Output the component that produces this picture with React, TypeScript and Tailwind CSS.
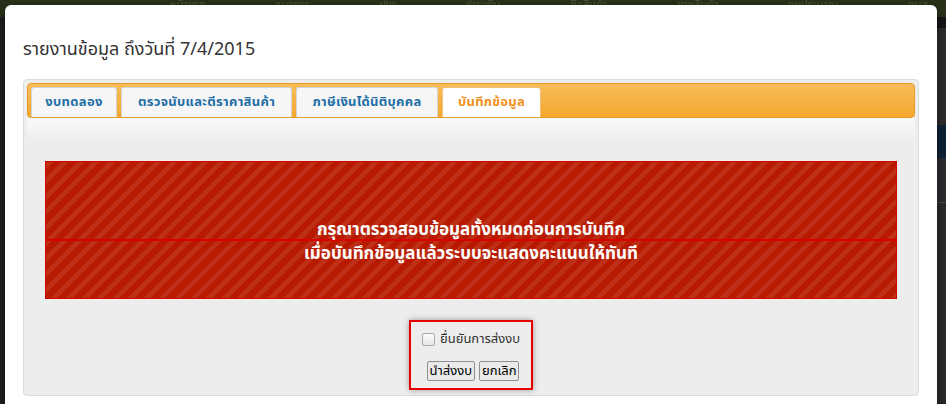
import React from 'react';

const tabs = [
  { label: 'งบทดลอง', w: 'w-[86px]' },
  { label: 'ตรวจนับและตีราคาสินค้า', w: 'w-[171px]' },
  { label: 'ภาษีเงินได้นิติบุคคล', w: 'w-[142px]' },
];

export default function App() {
  return (
    <div className="relative h-[404px] w-[946px] overflow-hidden bg-[#1f1f1f] font-['Noto_Sans_Thai','Noto_Sans','DejaVu_Sans',sans-serif]">
      {/* page behind the modal */}
      <div className="flex h-[17px] items-start gap-[70px] bg-[#29311a] pl-[170px] text-[11px] leading-[10px] text-[#4a5533]">
        <span>หน้าแรก</span>
        <span>ธนาคาร</span>
        <span>เช็ค</span>
        <span>ชำระเงิน</span>
        <span>ซื้อสินค้า</span>
        <span>ขายสินค้า</span>
        <span>งบประมาณ</span>
        <span>คนส</span>
      </div>
      <div className="flex justify-end">
        <div className="flex w-[9px] flex-col">
          <div className="h-[11px] bg-[#151515]" />
          <div className="h-[97px] bg-[#2c2c2c]" />
          <div className="h-[33px] bg-[#0f2137]" />
          <div className="h-[44px] bg-[#2a2c30]" />
          <div className="h-px bg-[#4a4a4a]" />
          <div className="h-[200px] bg-[#2b2b2b]" />
        </div>
      </div>

      {/* modal */}
      <div className="absolute left-[5px] top-[5px] h-[430px] w-[932px] rounded-[6px] bg-white shadow-[0_3px_9px_rgba(0,0,0,0.5)]">
        <div className="h-[74px] px-[18px] pt-[33px]">
          <h4 className="text-[18px] leading-[24px] text-[#333]">รายงานข้อมูล ถึงวันที่ 7/4/2015</h4>
        </div>

        <div className="ml-[18px] w-[896px] rounded-[4px] border border-[#dcdcdc] bg-[#ededed] px-[3px] pt-[3px] pb-[5px]">
          <div className="flex h-[35px] items-end gap-[4px] rounded-[4px] border border-[#e69b28] bg-gradient-to-b from-[#f7bd58] to-[#f4a72c] px-[3px]">
            {tabs.map((t) => (
              <div
                key={t.label}
                className={`flex h-[30px] ${t.w} items-center justify-center rounded-t-[3px] border border-b-0 border-[#d4d4d4] bg-[#f6f6f6] text-[13px] font-bold tracking-[0.3px] text-[#1f6fa6]`}
              >
                {t.label}
              </div>
            ))}
            <div className="flex h-[30px] w-[99px] items-center justify-center rounded-t-[3px] border border-b-0 border-[#f0c27a] bg-white text-[13px] font-bold tracking-[0.3px] text-[#f0901a]">
              บันทึกข้อมูล
            </div>
          </div>

          <div className="bg-gradient-to-b from-[#fafafa] to-[#ededed] to-[24px] px-[18px] pt-[43px]">
            <div className="h-[138px] border border-[#d60000] bg-[#b81a00] bg-[repeating-linear-gradient(135deg,rgba(255,255,255,0.09)_0px,rgba(255,255,255,0.09)_5px,transparent_5px,transparent_11px)] pt-[53px] text-center text-[17px] font-bold text-white">
              <div className="h-[24px] leading-[30px]">กรุณาตรวจสอบข้อมูลทั้งหมดก่อนการบันทึก</div>
              <div className="h-[2px] bg-[#d90000]" />
              <div className="h-[24px] leading-[26px]">เมื่อบันทึกข้อมูลแล้วระบบจะแสดงคะแนนให้ทันที</div>
            </div>

            <div className="mx-auto mt-[21px] flex h-[70px] w-[124px] flex-col items-center border-2 border-[#e60000] pt-[8px] shadow-[0_0_6px_rgba(0,0,0,0.35)]">
              <label className="flex items-center gap-[5px] text-[13px] text-[#333]">
                <span className="h-[13px] w-[13px] rounded-[2px] border border-[#a9a9a9] bg-gradient-to-b from-[#fdfdfd] to-[#e6e6e6]" />
                ยื่นยันการส่งงบ
              </label>
              <div className="mt-[11px] flex gap-[4px] pl-[4px]">
                <button type="button" className="h-[20px] rounded-[2px] border border-[#8f8f8f] bg-[#eaeaea] px-[2px] text-[13px] leading-[18px] text-black">
                  นำส่งงบ
                </button>
                <button type="button" className="h-[20px] rounded-[2px] border border-[#8f8f8f] bg-[#eaeaea] px-[2px] text-[13px] leading-[18px] text-black">
                  ยกเลิก
                </button>
              </div>
            </div>
          </div>
        </div>
      </div>
    </div>
  );
}
